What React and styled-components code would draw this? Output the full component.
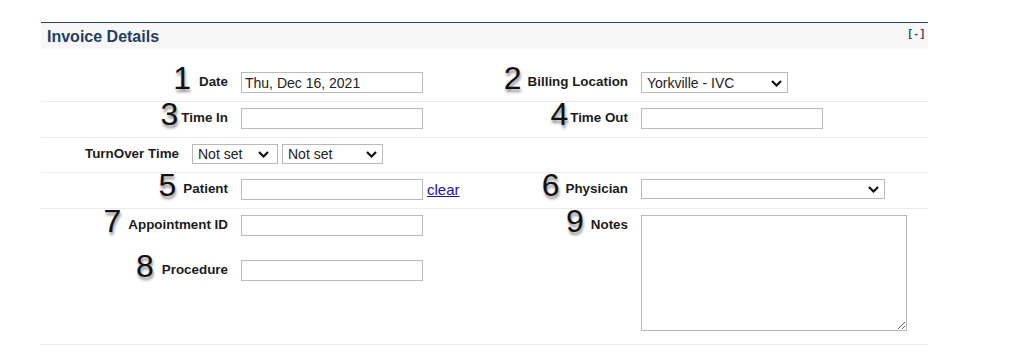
import React from "react";
import styled, { createGlobalStyle } from "styled-components";

const Global = createGlobalStyle`
  body {
    margin: 0;
    background: #fff;
    font-family: "Liberation Sans", Arial, sans-serif;
  }
`;

const Panel = styled.div`
  margin: 22px 0 0 41px;
  width: 887px;
`;

const Header = styled.div`
  display: flex;
  align-items: center;
  justify-content: space-between;
  height: 27px;
  padding: 1px 4px 0 6px;
  box-sizing: border-box;
  border-top: 1px solid #2d4262;
  background: #f7f7f7;
`;

const Title = styled.h2`
  margin: 0;
  font-size: 16px;
  font-weight: bold;
  color: #1f3e62;
`;

const Toggle = styled.span`
  font-size: 10px;
  font-weight: bold;
  color: #1f3a60;
  margin-top: -6px;
  cursor: pointer;
`;

const Form = styled.div`
  margin-top: 17px;
`;

const Row = styled.div`
  display: grid;
  grid-template-columns: ${(p) => p.$cols || "193px 206px 194px 1fr"};
  grid-template-rows: ${(p) => p.$rows || "auto"};
  row-gap: 24px;
  padding: 6px 0 ${(p) => p.$padBottom || 8}px;
  border-bottom: 1px solid #ececec;
`;

const LabelCell = styled.label`
  padding: 1px 6px 0 0;
  text-align: right;
  font-size: 13.4px;
  font-weight: bold;
  line-height: 18px;
  color: #1c1c1c;
  white-space: nowrap;
`;

// the big numbered callouts drawn over the form
const Marker = styled.span`
  font-size: 32px;
  font-weight: normal;
  line-height: 0;
  vertical-align: -3px;
  color: #111;
  text-shadow: 1px 3px 3px rgba(0, 0, 0, 0.45);
  margin-right: ${(p) => p.$gap}px;
`;

const FieldCell = styled.div`
  display: flex;
  align-items: flex-start;
  gap: 4px;
  padding-left: 7px;
  grid-row: ${(p) => (p.$tall ? "span 2" : "auto")};
`;

const TextInput = styled.input`
  box-sizing: border-box;
  width: ${(p) => p.$w || 182}px;
  height: 21px;
  margin: 0;
  padding: 0 3px;
  border: 1px solid #b9b9b9;
  border-radius: 0;
  font-family: "Liberation Sans", Arial, sans-serif;
  font-size: 14px;
  color: #222;
  background: #fff;
`;

const SelectWrap = styled.div`
  position: relative;
  width: ${(p) => p.$w}px;
  height: ${(p) => p.$h || 21}px;
`;

const Select = styled.select`
  appearance: none;
  box-sizing: border-box;
  width: 100%;
  height: 100%;
  margin: 0;
  padding: 0 22px 0 5px;
  border: 1px solid #b9b9b9;
  border-radius: 0;
  background: #fff;
  font-family: "Liberation Sans", Arial, sans-serif;
  font-size: 14px;
  color: #222;
`;

const Chevron = styled.svg`
  position: absolute;
  right: ${(p) => p.$right || 6}px;
  top: 50%;
  margin-top: -3px;
  pointer-events: none;
`;

const ClearLink = styled.a`
  font-size: 15px;
  line-height: 21px;
  color: #2411a8;
  text-decoration: underline;
`;

const Notes = styled.textarea`
  display: block;
  box-sizing: border-box;
  width: 266px;
  height: 116px;
  margin: 0;
  padding: 3px;
  border: 1px solid #b9b9b9;
  border-radius: 0;
  font-family: "Liberation Sans", Arial, sans-serif;
  font-size: 14px;
`;

function Dropdown({ w, h, right, options }) {
  return (
    <SelectWrap $w={w} $h={h}>
      <Select>
        {options.map((o) => (
          <option key={o}>{o}</option>
        ))}
      </Select>
      <Chevron $right={right} width="11" height="7" viewBox="0 0 11 7">
        <path d="M1 1 L5.5 5.5 L10 1" fill="none" stroke="#111" strokeWidth="2.2" />
      </Chevron>
    </SelectWrap>
  );
}

export default function App() {
  return (
    <>
      <Global />
      <Panel>
        <Header>
          <Title>Invoice Details</Title>
          <Toggle>[ - ]</Toggle>
        </Header>
        <Form>
          <Row>
            <LabelCell><Marker $gap={8}>1</Marker>Date</LabelCell>
            <FieldCell><TextInput defaultValue="Thu, Dec 16, 2021" /></FieldCell>
            <LabelCell><Marker $gap={6}>2</Marker>Billing Location</LabelCell>
            <FieldCell><Dropdown w={147} options={["Yorkville - IVC"]} /></FieldCell>
          </Row>
          <Row>
            <LabelCell><Marker $gap={3}>3</Marker>Time In</LabelCell>
            <FieldCell><TextInput /></FieldCell>
            <LabelCell><Marker $gap={2}>4</Marker>Time Out</LabelCell>
            <FieldCell><TextInput /></FieldCell>
          </Row>
          <Row $cols="144px 1fr">
            <LabelCell>TurnOver Time</LabelCell>
            <FieldCell>
              <Dropdown w={86} h={20} right={9} options={["Not set"]} />
              <Dropdown w={101} h={20} options={["Not set"]} />
            </FieldCell>
          </Row>
          <Row>
            <LabelCell><Marker $gap={7}>5</Marker>Patient</LabelCell>
            <FieldCell>
              <TextInput />
              <ClearLink href="#">clear</ClearLink>
            </FieldCell>
            <LabelCell><Marker $gap={6}>6</Marker>Physician</LabelCell>
            <FieldCell><Dropdown w={244} h={20} options={[""]} /></FieldCell>
          </Row>
          <Row $rows="21px auto" $padBottom={13}>
            <LabelCell><Marker $gap={7}>7</Marker>Appointment ID</LabelCell>
            <FieldCell><TextInput /></FieldCell>
            <LabelCell><Marker $gap={7}>9</Marker>Notes</LabelCell>
            <FieldCell $tall><Notes /></FieldCell>
            <LabelCell><Marker $gap={8}>8</Marker>Procedure</LabelCell>
            <FieldCell><TextInput /></FieldCell>
          </Row>
        </Form>
      </Panel>
    </>
  );
}
